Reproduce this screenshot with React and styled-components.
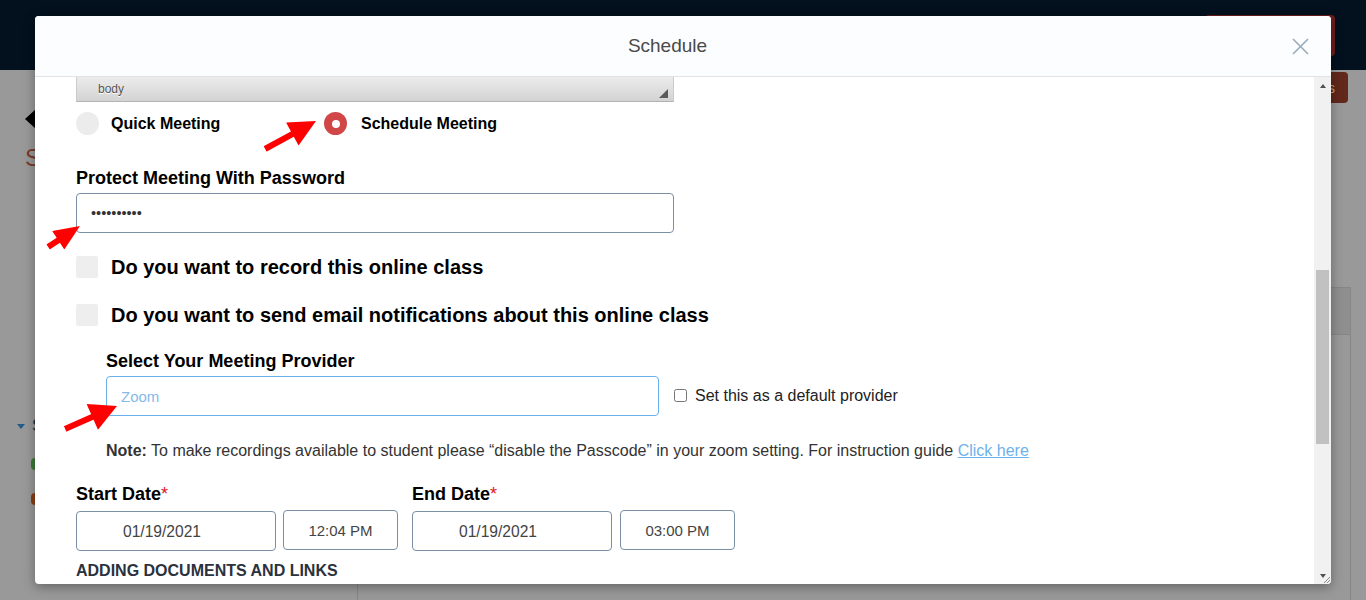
import styled, { createGlobalStyle } from "styled-components";

const GlobalStyle = createGlobalStyle`
  html, body {
    margin: 0;
    padding: 0;
  }
  body {
    background: #999999;
    font-family: "Liberation Sans", Arial, sans-serif;
    overflow: hidden;
  }
`;

const Page = styled.div`
  position: relative;
  width: 1366px;
  height: 600px;
  overflow: hidden;
  background: #999999;
`;

/* ---------- page behind the dialog (already dimmed) ---------- */

const TopBar = styled.header`
  height: 70px;
  box-sizing: border-box;
  padding: 15px 31px 0 0;
  display: flex;
  justify-content: flex-end;
  align-items: flex-start;
  background: #03111e;
`;

const HeaderButton = styled.div`
  width: 130px;
  height: 41px;
  border-radius: 4px;
  background: #6e1d1d;
`;

const Main = styled.div`
  display: flex;
  height: 530px;
`;

const Sidebar = styled.aside`
  width: 357px;
  box-sizing: border-box;
  padding: 39px 0 0 25px;
  display: flex;
  flex-direction: column;
  align-items: flex-start;
`;

const BackArrow = styled.div`
  width: 0;
  height: 0;
  border-top: 10px solid transparent;
  border-bottom: 10px solid transparent;
  border-right: 11px solid #000;
`;

const PageTitle = styled.div`
  margin-top: 15px;
  font-size: 24px;
  color: #7a3a2c;
`;

const TreeHead = styled.div`
  margin: 245px 0 0 -8px;
  display: flex;
  align-items: center;
  gap: 7px;
  font-size: 16px;
  color: #1d2a36;
  &::before {
    content: "";
    border-left: 4px solid transparent;
    border-right: 4px solid transparent;
    border-top: 5px solid #245a8c;
  }
`;

const TreeItem = styled.div`
  margin: ${(p) => p.$mt}px 0 0 6px;
  width: 60px;
  height: 12px;
  border-radius: 4px;
  background: ${(p) => p.$color};
`;

const Content = styled.section`
  flex: 1;
  display: flex;
  flex-direction: column;
`;

const ActionButton = styled.div`
  align-self: flex-end;
  margin: 2px 18px 0 0;
  width: 48px;
  height: 31px;
  box-sizing: border-box;
  padding-right: 13px;
  border-radius: 4px;
  background: #62281b;
  color: #c9a461;
  font-size: 14px;
  display: flex;
  align-items: center;
  justify-content: flex-end;
  overflow: hidden;
`;

const SidePanel = styled.div`
  margin: 184px 15px 0 0;
  flex: 1;
  border: 1px solid #868686;
  border-bottom: none;
`;

const SidePanelHead = styled.div`
  height: 46px;
  background: #8f8f8f;
  border-bottom: 1px solid #868686;
`;

/* ---------- dialog ---------- */

const Overlay = styled.div`
  position: absolute;
  inset: 0;
  display: flex;
  align-items: center;
  justify-content: center;
`;

const Modal = styled.div`
  width: 1296px;
  height: 568px;
  display: flex;
  flex-direction: column;
  background: #fff;
  border-radius: 4px;
  overflow: hidden;
  box-shadow: 0 3px 12px rgba(0, 0, 0, 0.35);
`;

const ModalHeader = styled.div`
  height: 61px;
  box-sizing: border-box;
  padding: 0 15px;
  display: flex;
  align-items: center;
  background: #fcfdfe;
  border-bottom: 1px solid #e3e3e3;
`;

const ModalTitle = styled.h2`
  flex: 1;
  margin: 0;
  text-align: center;
  font-size: 19px;
  font-weight: normal;
  color: #4a4a4a;
`;

const CloseButton = styled.button`
  width: 31px;
  height: 31px;
  padding: 0;
  border: none;
  background: none;
  display: flex;
  align-items: center;
  justify-content: center;
`;

const ModalBody = styled.div`
  flex: 1;
  display: flex;
  min-height: 0;
`;

const BodyContent = styled.div`
  flex: 1;
  padding-left: 41px;
  overflow: hidden;
  display: flex;
  flex-direction: column;
  align-items: flex-start;
`;

const EditorPath = styled.div`
  width: 598px;
  height: 25px;
  box-sizing: border-box;
  padding: 0 5px 0 21px;
  display: flex;
  align-items: center;
  justify-content: space-between;
  border: 1px solid #cbcbcb;
  border-top: none;
  border-bottom-color: #b3b3b3;
  background: linear-gradient(#ececec, #d3d3d3);
`;

const PathText = styled.span`
  font-size: 12px;
  color: #555;
  text-shadow: 0 1px 0 #fff;
`;

const Grip = styled.span`
  align-self: flex-end;
  margin-bottom: 3px;
  width: 0;
  height: 0;
  border-left: 9px solid transparent;
  border-bottom: 9px solid #5a5a5a;
`;

const RadioRow = styled.div`
  margin-top: 10px;
  display: flex;
`;

const RadioOption = styled.label`
  flex: 0 0 248px;
  display: flex;
  align-items: center;
  gap: ${(p) => p.$gap}px;
  font-size: 16px;
  line-height: 20px;
  font-weight: bold;
  color: #000;
`;

const RadioDot = styled.span`
  width: 23px;
  height: 23px;
  border-radius: 50%;
  background: ${(p) => (p.$checked ? "#d14646" : "#ececec")};
  display: flex;
  align-items: center;
  justify-content: center;
  &::after {
    content: "";
    display: ${(p) => (p.$checked ? "block" : "none")};
    width: 8px;
    height: 8px;
    border-radius: 50%;
    background: #fff;
  }
`;

const FieldLabel = styled.div`
  margin-top: ${(p) => p.$mt || 0}px;
  font-size: 18px;
  line-height: 22px;
  font-weight: bold;
  color: #000;
`;

const Required = styled.span`
  color: #e0141e;
  font-weight: normal;
`;

const TextBox = styled.div`
  margin-top: 4px;
  width: ${(p) => p.$w}px;
  height: 40px;
  box-sizing: border-box;
  padding-left: 14px;
  display: flex;
  align-items: center;
  border: 1px solid ${(p) => (p.$focus ? "#68b1ea" : "#7b8fa2")};
  border-radius: 4px;
  font-size: ${(p) => (p.$focus ? "15px" : "14.5px")};
  color: ${(p) => (p.$focus ? "#86b9e8" : "#333")};
`;

const CheckRow = styled.label`
  margin-top: ${(p) => p.$mt}px;
  height: 24px;
  display: flex;
  align-items: center;
  gap: 13px;
  font-size: 20px;
  font-weight: bold;
  color: #000;
`;

const CheckSquare = styled.span`
  width: 22px;
  height: 22px;
  border-radius: 2px;
  background: #eeeeee;
`;

const ProviderBlock = styled.div`
  padding-left: 30px;
`;

const ProviderRow = styled.div`
  display: flex;
  align-items: flex-end;
  gap: 15px;
`;

const DefaultOption = styled.label`
  height: 41px;
  display: flex;
  align-items: center;
  font-size: 16px;
  color: #222;
  input {
    width: 13px;
    height: 13px;
    margin: 0 8px 0 0;
  }
`;

const Note = styled.p`
  margin: 25px 0 0;
  font-size: 16px;
  line-height: 20px;
  color: #333;
  b {
    color: #333;
  }
`;

const Link = styled.a`
  color: #6db2ea;
  text-decoration: underline;
`;

const DateRow = styled.div`
  margin-top: 22px;
  display: flex;
  gap: 14px;
`;

const DateGroup = styled.div`
  display: flex;
  flex-direction: column;
`;

const DateInputs = styled.div`
  margin-top: 6px;
  display: flex;
  align-items: flex-start;
  gap: ${(p) => p.$gap}px;
`;

const DateBox = styled.div`
  width: 200px;
  height: 40px;
  box-sizing: border-box;
  padding: 1px 0 0 46px;
  display: flex;
  align-items: center;
  border: 1px solid #7b8fa2;
  border-radius: 4px;
  font-size: 15.6px;
  color: #444;
`;

const TimeBox = styled.div`
  margin-top: -1px;
  width: 115px;
  height: 40px;
  box-sizing: border-box;
  display: flex;
  align-items: center;
  justify-content: center;
  border: 1px solid #7b8fa2;
  border-radius: 4px;
  font-size: 15px;
  color: #444;
`;

const SectionTitle = styled.div`
  margin-top: 10px;
  font-size: 16px;
  line-height: 20px;
  font-weight: bold;
  color: #2a323d;
`;

/* ---------- fake scrollbar ---------- */

const ScrollTrack = styled.div`
  position: relative;
  width: 17px;
  display: flex;
  flex-direction: column;
  background: #f1f1f1;
`;

const ScrollButton = styled.div`
  height: 17px;
  display: flex;
  align-items: center;
  justify-content: center;
  &::before {
    content: "";
    border-left: 3.5px solid transparent;
    border-right: 3.5px solid transparent;
    ${(p) =>
      p.$down ? "border-top: 4px solid #505050;" : "border-bottom: 4px solid #505050;"}
  }
`;

const ScrollArea = styled.div`
  flex: 1;
`;

const Thumb = styled.div`
  margin: ${(p) => p.$offset}px 2px 0;
  height: ${(p) => p.$size}px;
  background: #c1c1c1;
`;

const ResizeGrip = styled.svg`
  position: absolute;
  right: 0;
  bottom: 0;
`;

/* ---------- annotation arrows ---------- */

const ArrowSvg = styled.svg`
  position: absolute;
  left: ${(p) => p.$x}px;
  top: ${(p) => p.$y - p.$half}px;
  transform-origin: 0 50%;
  transform: rotate(${(p) => p.$angle}deg);
`;

function Arrow({ from, to, head, half, thick }) {
  const dx = to[0] - from[0];
  const dy = to[1] - from[1];
  const len = Math.hypot(dx, dy);
  const angle = (Math.atan2(dy, dx) * 180) / Math.PI;
  const base = len - head;
  return (
    <ArrowSvg
      $x={from[0]}
      $y={from[1]}
      $half={half}
      $angle={angle}
      width={len}
      height={half * 2}
      viewBox={`0 0 ${len} ${half * 2}`}
    >
      <rect x="0" y={half - thick / 2} width={base + 1} height={thick} fill="#ff0000" />
      <polygon points={`${base},0 ${len},${half} ${base},${half * 2}`} fill="#ff0000" />
    </ArrowSvg>
  );
}

function App() {
  return (
    <Page>
      <GlobalStyle />
      <TopBar>
        <HeaderButton />
      </TopBar>
      <Main>
        <Sidebar>
          <BackArrow />
          <PageTitle>Sessions</PageTitle>
          <TreeHead>Sections</TreeHead>
          <TreeItem $mt={23} $color="#3c7a39" />
          <TreeItem $mt={23} $color="#8a3c17" />
        </Sidebar>
        <Content>
          <ActionButton>s</ActionButton>
          <SidePanel>
            <SidePanelHead />
          </SidePanel>
        </Content>
      </Main>

      <Overlay>
        <Modal>
          <ModalHeader>
            <ModalTitle>Schedule</ModalTitle>
            <CloseButton aria-label="Close">
              <svg width="17" height="17" viewBox="0 0 17 17">
                <path d="M1 1L16 16M16 1L1 16" stroke="#9aabba" strokeWidth="1.6" />
              </svg>
            </CloseButton>
          </ModalHeader>
          <ModalBody>
            <BodyContent>
              <EditorPath>
                <PathText>body</PathText>
                <Grip />
              </EditorPath>

              <RadioRow>
                <RadioOption $gap={12}>
                  <RadioDot />
                  Quick Meeting
                </RadioOption>
                <RadioOption $gap={14}>
                  <RadioDot $checked />
                  Schedule Meeting
                </RadioOption>
              </RadioRow>

              <FieldLabel $mt={32}>Protect Meeting With Password</FieldLabel>
              <TextBox $w={598}>••••••••••</TextBox>

              <CheckRow $mt={22}>
                <CheckSquare />
                Do you want to record this online class
              </CheckRow>
              <CheckRow $mt={24}>
                <CheckSquare />
                Do you want to send email notifications about this online class
              </CheckRow>

              <ProviderBlock>
                <FieldLabel $mt={23}>Select Your Meeting Provider</FieldLabel>
                <ProviderRow>
                  <TextBox $w={553} $focus>
                    Zoom
                  </TextBox>
                  <DefaultOption>
                    <input type="checkbox" readOnly />
                    Set this as a default provider
                  </DefaultOption>
                </ProviderRow>
                <Note>
                  <b>Note:</b> To make recordings available to student please “disable the
                  Passcode” in your zoom setting. For instruction guide <Link>Click here</Link>
                </Note>
              </ProviderBlock>

              <DateRow>
                <DateGroup>
                  <FieldLabel>
                    Start Date<Required>*</Required>
                  </FieldLabel>
                  <DateInputs $gap={7}>
                    <DateBox>01/19/2021</DateBox>
                    <TimeBox>12:04 PM</TimeBox>
                  </DateInputs>
                </DateGroup>
                <DateGroup>
                  <FieldLabel>
                    End Date<Required>*</Required>
                  </FieldLabel>
                  <DateInputs $gap={8}>
                    <DateBox>01/19/2021</DateBox>
                    <TimeBox>03:00 PM</TimeBox>
                  </DateInputs>
                </DateGroup>
              </DateRow>

              <SectionTitle>ADDING DOCUMENTS AND LINKS</SectionTitle>
            </BodyContent>

            <ScrollTrack>
              <ScrollButton />
              <ScrollArea>
                <Thumb $offset={176} $size={174} />
              </ScrollArea>
              <ScrollButton $down />
              <ResizeGrip width="8" height="8" viewBox="0 0 8 8">
                <path d="M7 1L1 7M7 4L4 7" stroke="#8a8a8a" strokeWidth="1" />
              </ResizeGrip>
            </ScrollTrack>
          </ModalBody>
        </Modal>
      </Overlay>

      <Arrow from={[265, 149]} to={[316, 121]} head={27} half={13} thick={6} />
      <Arrow from={[48, 247]} to={[80, 226]} head={26} half={11} thick={6} />
      <Arrow from={[65, 429]} to={[117, 406]} head={27} half={14} thick={6} />
    </Page>
  );
}

export default App;
